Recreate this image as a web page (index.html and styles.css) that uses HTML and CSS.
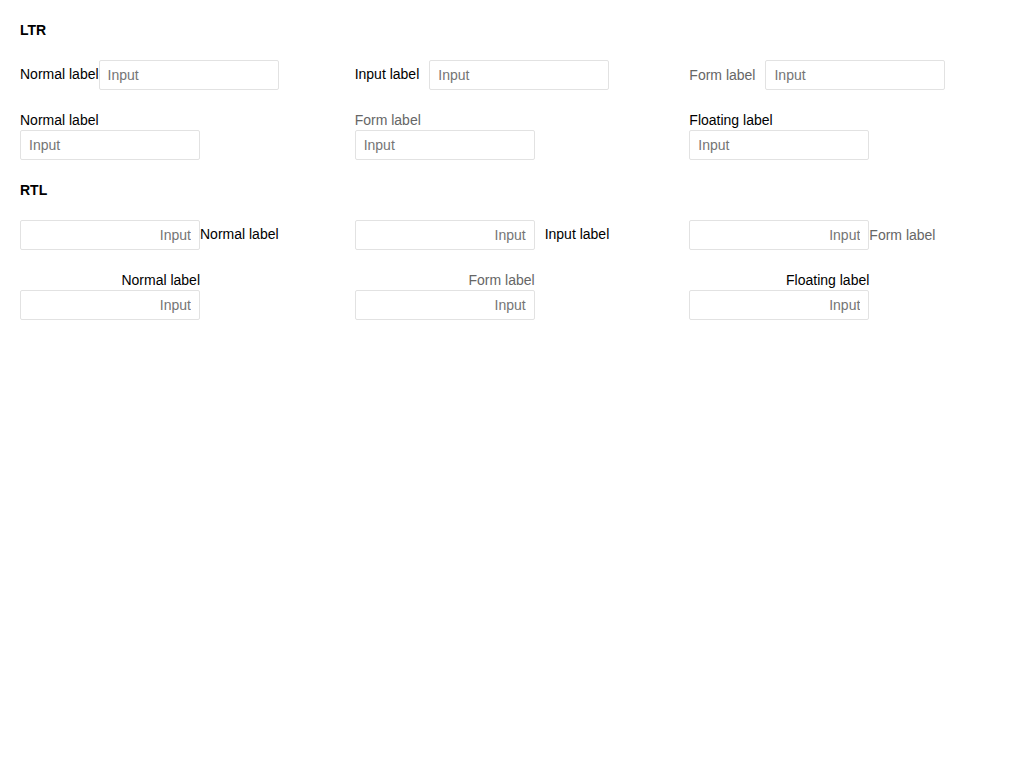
FILE: index.html
```html
<!DOCTYPE html>
<html lang="en">
<head>
<meta charset="utf-8">
<title>Labels</title>
<link rel="stylesheet" href="styles.css">
</head>
<body>
<main class="page">
  <section class="block">
    <h2 class="heading">LTR</h2>
    <div class="grid">
      <div class="cell"><div class="field inline"><label class="label normal">Normal label</label><input class="input" placeholder="Input"></div></div>
      <div class="cell"><div class="field inline"><label class="label input-label">Input label</label><input class="input" placeholder="Input"></div></div>
      <div class="cell"><div class="field inline"><label class="label form-label">Form label</label><input class="input" placeholder="Input"></div></div>
      <div class="cell"><div class="field stacked"><label class="label normal">Normal label</label><input class="input" placeholder="Input"></div></div>
      <div class="cell"><div class="field stacked"><label class="label form-label stacked-form">Form label</label><input class="input" placeholder="Input"></div></div>
      <div class="cell"><div class="field stacked"><label class="label floating">Floating label</label><input class="input" placeholder="Input"></div></div>
    </div>
  </section>
  <section class="block">
    <h2 class="heading">RTL</h2>
    <div class="grid">
      <div class="cell"><div class="field inline" dir="rtl"><label class="label normal">Normal label</label><input class="input" placeholder="Input"></div></div>
      <div class="cell"><div class="field inline" dir="rtl"><label class="label input-label">Input label</label><input class="input" placeholder="Input"></div></div>
      <div class="cell"><div class="field inline" dir="rtl"><label class="label form-label">Form label</label><input class="input" placeholder="Input"></div></div>
      <div class="cell"><div class="field stacked" dir="rtl"><label class="label normal">Normal label</label><input class="input" placeholder="Input"></div></div>
      <div class="cell"><div class="field stacked" dir="rtl"><label class="label form-label stacked-form">Form label</label><input class="input" placeholder="Input"></div></div>
      <div class="cell"><div class="field stacked" dir="rtl"><label class="label floating">Floating label</label><input class="input" placeholder="Input"></div></div>
    </div>
  </section>
</main>
</body>
</html>
```
FILE: styles.css
```css
* { box-sizing: border-box; }
html, body { margin: 0; background: #fff; }
body {
  font-family: "Liberation Sans", Arial, sans-serif;
  font-size: 14px;
  color: #000;
}
.page {
  padding: 20px 0 20px 20px;
  display: flex;
  flex-direction: column;
  gap: 20px;
}
.block {
  display: flex;
  flex-direction: column;
  gap: 20px;
}
.heading {
  margin: 0;
  font-size: 14px;
  font-weight: bold;
  line-height: 20px;
}
.grid {
  display: grid;
  grid-template-columns: repeat(3, 1fr);
  row-gap: 20px;
}
.cell { display: flex; }
.field { display: flex; }
.field.inline { align-items: center; }
.field.stacked { flex-direction: column; }
.label { line-height: 20px; }
.inline .label { line-height: 18px; }
.inline .normal,
.inline .input-label { margin-bottom: 2px; }
.input-label { margin-inline-end: 10px; }
.form-label { color: #666; }
.inline .form-label { margin-right: 10px; }
.input {
  width: 180px;
  height: 30px;
  margin: 0;
  padding: 0 8px;
  border: 1px solid #e2e2e2;
  border-radius: 2px;
  font-family: "Liberation Sans", Arial, sans-serif;
  font-size: 14px;
  color: #333;
  background: #fff;
  outline: none;
}
.input::placeholder { color: #757575; opacity: 1; }
```
